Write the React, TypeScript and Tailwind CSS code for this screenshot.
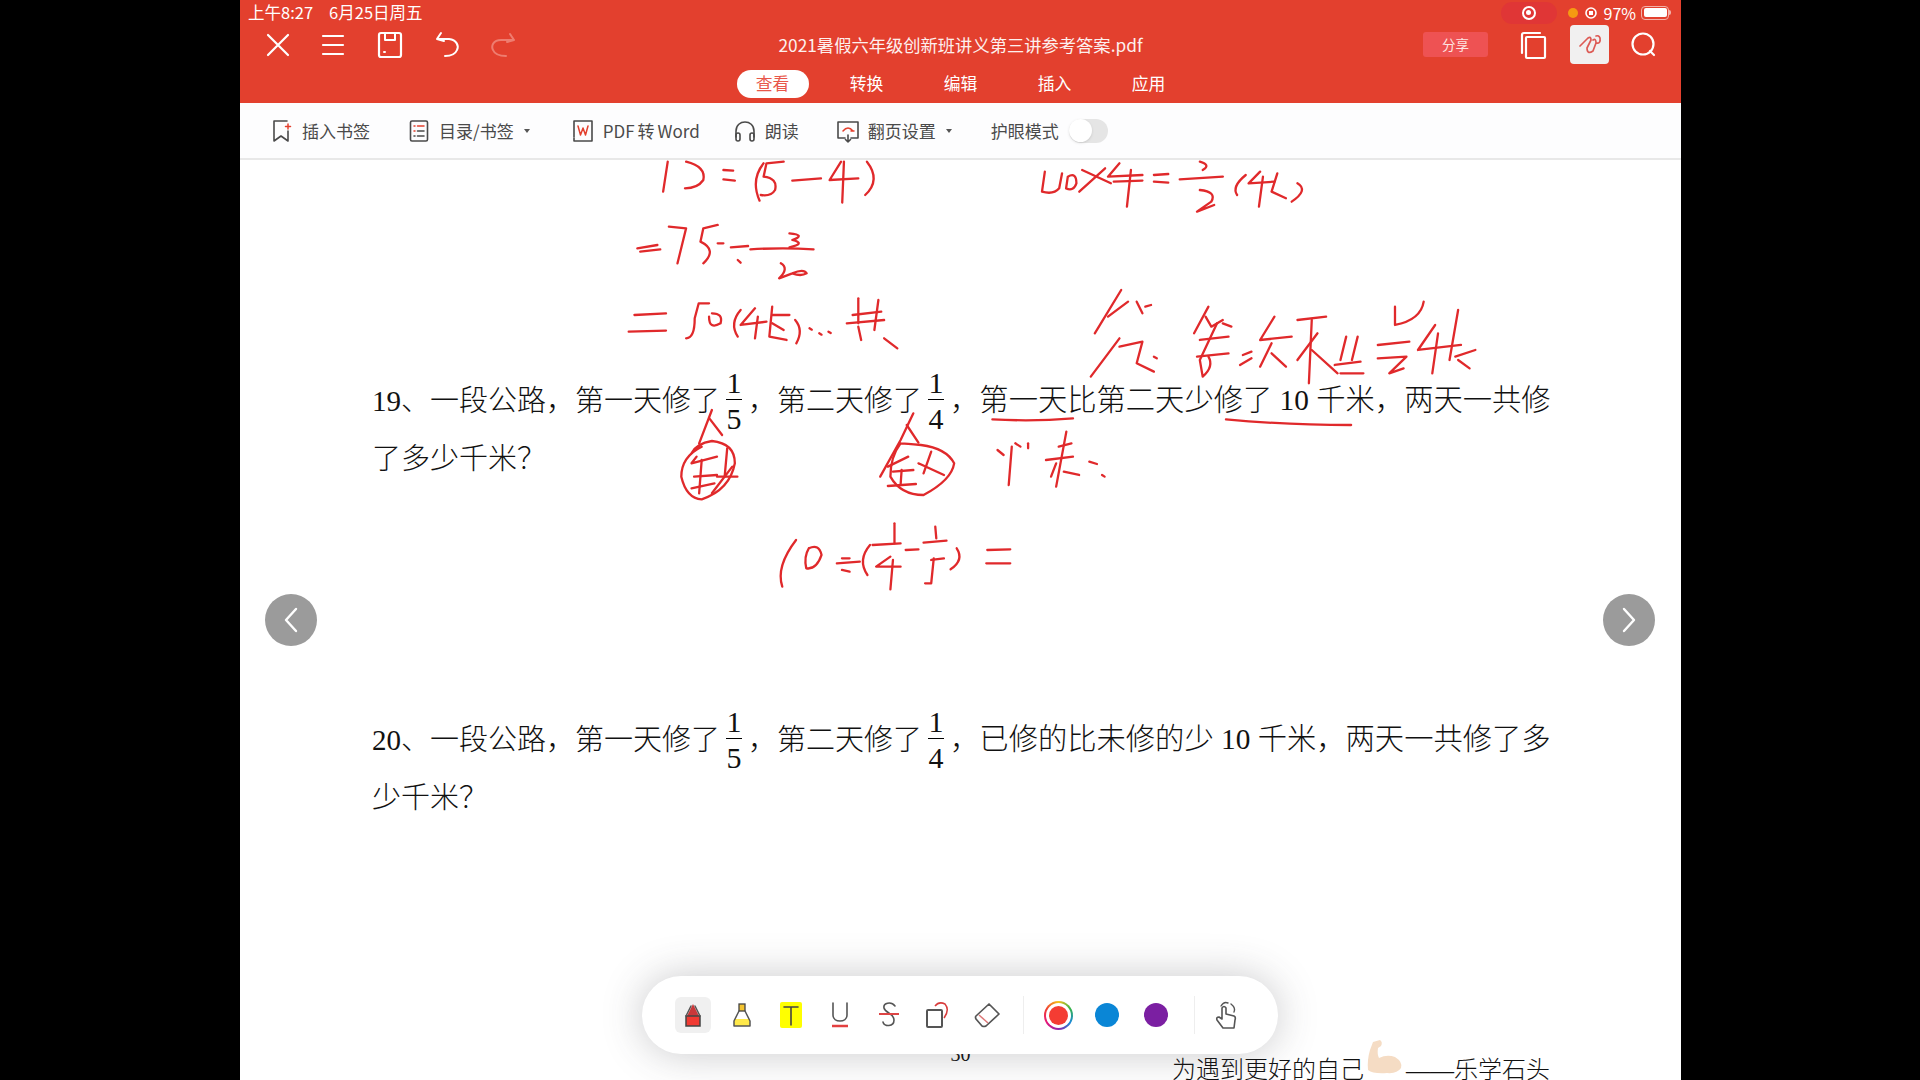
import type { ReactNode } from 'react'

const cjk = { fontFamily: '"Noto Sans CJK SC", "Noto Sans", sans-serif' }
const paper = { fontFamily: '"Liberation Serif", "Noto Sans CJK SC", serif' }

const Stroke = ({ d, w = 2.3 }: { d: string; w?: number }) => (
  <path d={d} fill="none" stroke="#e0292b" strokeWidth={w} strokeLinecap="round" strokeLinejoin="round" vectorEffect="non-scaling-stroke" />
)

// pen strokes, traced in crop coordinates and placed with a group transform
const upper = [
  'M118 5 L110 95', 'M150 5 Q185 20 180 60 Q170 85 148 85', 'M215 30 L232 32', 'M215 58 L235 62', 'M285 10 Q262 60 278 122',
  'M320 5 L290 10 L285 50 Q310 55 305 90 Q298 110 280 105', 'M335 62 L385 55', 'M420 5 L400 60 L450 55', 'M425 5 L422 128', 'M465 5 Q490 60 462 105',
  'M775 35 L770 95 Q790 105 800 85 L805 40', 'M815 50 Q830 35 830 70 Q825 95 812 85 Z', 'M840 30 L890 70', 'M880 25 L835 95',
  'M905 10 L885 50 L945 45', 'M895 65 L945 62', 'M925 30 L918 140', 'M965 45 L990 42', 'M965 65 L990 68', 'M1010 58 L1085 50',
  'M1045 5 Q1065 15 1050 30', 'M1045 90 Q1075 95 1065 125 L1040 155 L1070 135', 'M1125 45 Q1100 80 1110 105', 'M1150 35 L1130 70 L1175 65',
  'M1155 50 L1148 140', 'M1180 40 L1170 95 L1195 115', 'M1215 70 Q1235 90 1205 125',
  'M65 265 L100 255', 'M70 275 L105 268', 'M120 200 L150 205 L135 310', 'M205 195 L180 205 L175 245 Q205 270 180 310', 'M205 250 L215 250',
  'M228 262 L258 258', 'M240 300 L245 308', 'M262 268 Q320 262 372 268', 'M330 220 Q360 225 335 240 Q360 250 330 262',
  'M315 310 Q330 325 312 355 L335 340 Q355 325 360 340 Q350 350 335 340',
  'M60 465 L115 460', 'M50 515 L115 512', 'M190 430 L172 430 L165 475 Q165 535 150 535', 'M195 460 Q215 460 210 490 Q190 510 190 470',
  'M245 450 Q225 490 240 530', 'M270 445 L245 495 L290 485', 'M275 470 L270 535', 'M300 440 L295 530 L325 540', 'M300 465 L330 465', 'M300 490 L320 510',
  'M340 480 Q355 510 342 550', 'M365 505 l4 4', 'M382 520 l4 4', 'M398 515 l4 4', 'M450 415 L450 490', 'M485 420 L478 510', 'M440 465 L490 455', 'M430 490 L495 480',
  'M455 540 L450 500', 'M495 535 L518 565',
  'M908 390 L862 520', 'M885 470 L920 425', 'M935 425 L945 460', 'M950 440 L960 435', 'M905 535 L855 650', 'M905 560 L945 545 L935 610 L965 635', 'M965 590 L970 595',
  'M1060 440 L1035 520', 'M1055 470 L1065 500 L1085 480', 'M1085 490 L1100 500', 'M1045 540 L1095 530', 'M1075 490 L1045 600 L1050 650 Q1070 620 1060 590', 'M1040 590 L1095 580',
  'M1120 585 L1135 575', 'M1115 615 L1135 595', 'M1175 470 L1150 540 L1205 530', 'M1170 550 L1150 620', 'M1170 580 L1195 620',
  'M1215 480 L1265 470', 'M1240 480 L1235 670', 'M1215 600 L1250 520', 'M1240 570 L1285 640', 'M1300 530 L1290 600', 'M1320 530 L1310 600', 'M1280 615 L1325 605', 'M1290 640 L1330 640',
  'M1385 440 L1385 495 Q1430 480 1435 425', 'M1355 555 L1410 545', 'M1355 595 L1405 590 L1375 640 L1400 625', 'M1455 495 L1425 570 L1500 555', 'M1460 520 L1450 640',
  'M1495 450 L1480 600', 'M1490 590 L1525 570', 'M1495 600 L1515 625',
]

const lower = [
  'M690 150 L665 250', 'M685 175 L710 225', 'M670 260 Q630 290 630 350 Q640 415 670 418 Q725 390 735 310 Q735 250 690 243 Q660 250 650 280',
  'M660 290 L650 310 L700 290', 'M655 350 L700 345', 'M650 385 L695 370', 'M670 300 L665 400', 'M720 265 L715 350', 'M700 350 L740 350', 'M690 400 L730 320',
  'M1085 160 L1060 240 L1020 350', 'M1072 195 L1095 248', 'M1060 250 Q1040 290 1040 350 Q1060 405 1105 405 Q1160 360 1165 310 Q1150 265 1100 255 Q1070 250 1060 250',
  'M1035 320 L1075 290', 'M1045 335 L1085 330', 'M1035 378 L1090 372', 'M1062 330 L1060 375', 'M1120 275 L1105 340', 'M1095 310 L1145 345',
  'M1250 270 L1262 285', 'M1285 250 L1295 260', 'M1310 250 L1310 265', 'M1278 260 L1272 375', 'M1385 215 L1365 380', 'M1370 260 L1395 250', 'M1345 300 L1398 290',
  'M1365 310 L1355 350', 'M1380 335 L1410 345', 'M1430 305 L1445 312', 'M1455 345 L1460 350', 'M1240 178 Q1320 185 1398 175',
  'M855 540 Q815 620 828 680', 'M880 565 Q900 550 905 585 Q895 630 875 625 Q870 590 880 565', 'M945 595 L960 595', 'M935 610 L980 605', 'M945 630 L960 635',
  'M1000 555 Q975 600 995 645', 'M1048 490 L1048 550', 'M1005 555 L1060 550', 'M1040 590 L1012 620 L1060 620', 'M1045 600 L1040 688', 'M1070 570 L1095 568',
  'M1128 500 L1130 535', 'M1105 548 L1150 542', 'M1120 600 L1145 595', 'M1125 595 L1120 670 Q1115 670 1108 670', 'M1170 565 Q1185 600 1158 628', 'M1230 570 L1275 568', 'M1228 610 L1275 610',
]

function Ink() {
  return (
    <svg className="absolute inset-0 pointer-events-none" width={1440} height={920} viewBox="240 160 1440 920">
      <g transform="translate(600 160) scale(0.574 0.3333)">
        {upper.map((d) => <Stroke key={d} d={d} />)}
      </g>
      <g transform="translate(360 360) scale(0.51 0.3333)">
        {lower.map((d) => <Stroke key={d} d={d} />)}
      </g>
      <g transform="translate(960 360) scale(0.3827 0.3333)">
        <Stroke d="M695 178 Q850 195 1022 195" />
      </g>
    </svg>
  )
}

const Line = ({ d, c = 'white', w = 2, f = 'none' }: { d: string; c?: string; w?: number; f?: string }) => (
  <path d={d} fill={f} stroke={c} strokeWidth={w} strokeLinecap="round" strokeLinejoin="round" />
)

const Ico = ({ size = 32, children }: { size?: number; children: ReactNode }) => (
  <svg width={size} height={size} viewBox="0 0 32 32" className="shrink-0">{children}</svg>
)

function Fraction({ bottom }: { bottom: string }) {
  return (
    <span className="flex flex-col items-center w-[24px] mx-[2px] -mt-[4px] leading-none text-[30px]">
      <span className="h-[33px] leading-[34px]">1</span>
      <span className="h-px w-[16px] bg-black" />
      <span className="h-[33px] leading-[38px]">{bottom}</span>
    </span>
  )
}

const ToolText = ({ children }: { children: ReactNode }) => <span className="text-[17px] text-[#4a4a4a] whitespace-nowrap">{children}</span>
const Caret = () => <span className="ml-[2px] w-0 h-0 border-x-[3.5px] border-x-transparent border-t-[4px] border-t-[#555]" />

function Tool({ className, icon, children, caret }: { className: string; icon: ReactNode; children: ReactNode; caret?: boolean }) {
  return (
    <div className={`flex items-center gap-2 ${className}`}>
      {icon}
      <ToolText>{children}</ToolText>
      {caret && <Caret />}
    </div>
  )
}

const tb = { c: '#4a4a4a', w: 1.6 }

const Dot = ({ className }: { className: string }) => <span className={`w-[24px] h-[24px] rounded-full ${className}`} />

function Cell({ active, children }: { active?: boolean; children: ReactNode }) {
  return <div className={`w-[36px] h-[36px] flex items-center justify-center rounded-md ${active ? 'bg-[#f0f0f0]' : ''}`}>{children}</div>
}

export default function App() {
  return (
    <div className="flex w-[1920px] h-[1080px] bg-black overflow-hidden" style={cjk}>
      <div className="w-[240px] shrink-0" />
      <main className="w-[1441px] h-[1080px] flex flex-col bg-white">
        <header className="h-[103px] bg-[#e3402e] text-white flex flex-col shrink-0">
          <div className="h-[25px] flex items-center pl-[8px] pr-[10px] text-[16.5px] leading-none">
            <span className="mr-[16px]">上午8:27</span>
            <span>6月25日周五</span>
            <span className="ml-auto mr-[4px] w-[56px] h-[22px] rounded-full bg-[#e03636] flex items-center justify-center">
              <span className="w-[14px] h-[14px] rounded-full border-2 border-white flex items-center justify-center">
                <span className="w-[5px] h-[5px] rounded-full bg-white" />
              </span>
            </span>
            <span className="ml-[7px] w-[10px] h-[10px] rounded-full bg-[#f59a12]" />
            <svg width="16" height="16" viewBox="0 0 16 16" className="ml-[5px]">
              <circle cx="8" cy="8" r="5" fill="none" stroke="white" strokeWidth="1.6" />
              <rect x="6" y="6" width="4" height="4" fill="white" />
            </svg>
            <span className="ml-[5px] text-[16px]">97%</span>
            <span className="ml-[5px] w-[28px] h-[14px] rounded-[4px] border border-[#f3b0a8] p-[1.5px]">
              <span className="block w-full h-full rounded-[2px] bg-white" />
            </span>
            <span className="w-[2px] h-[5px] bg-[#f3b0a8] rounded-r" />
          </div>
          <div className="h-[39px] grid grid-cols-[1fr_auto_1fr] items-center">
            <div className="flex items-center gap-[24px] pl-[22px]">
              <Ico><Line d="M6 6 L26 26 M26 6 L6 26" w={2.2} /></Ico>
              <Ico><Line d="M5 7 H25 M5 16 H25 M5 25 H25" w={2.2} /></Ico>
              <Ico>
                <rect x="5" y="4" width="22" height="24" rx="2" fill="none" stroke="white" strokeWidth="2.2" />
                <Line d="M11 5 V11 H21 V5" w={2} />
                <Line d="M10 23 H11" w={2} />
              </Ico>
              <Ico><Line d="M11 4 L7 10 L14 12 M8 10 H19 C27 11 29 17 27 21 C25 26 20 27 15 27" w={2} /></Ico>
              <Ico><Line d="M24 5 L28 11 L21 13 M27 11 H15 C7 11 5 17 7 21 C9 26 15 27 20 27" c="#ee7d70" w={2} /></Ico>
            </div>
            <div className="text-[17.3px] leading-none whitespace-nowrap text-[#fdf0ee]">2021暑假六年级创新班讲义第三讲参考答案.pdf</div>
            <div className="flex items-center justify-end pr-[21px]">
              <span className="w-[65px] h-[25px] rounded-[3px] bg-[#ee5253] text-[13.5px] flex items-center justify-center text-[#fde4e2]">分享</span>
              <span className="ml-[30px] flex">
                <Ico>
                  <rect x="8" y="8" width="19" height="21" rx="1" fill="none" stroke="white" strokeWidth="2.2" />
                  <Line d="M22 4 H6 Q4 4 4 6 V24" w={2.2} />
                </Ico>
              </span>
              <span className="ml-[20px] w-[39px] h-[39px] rounded bg-[#f1f0f0] flex items-center justify-center">
                <svg width="28" height="28" viewBox="0 0 28 28">
                  <Line d="M4 15 L12 7 Q15 5 15 9 L11 17 Q11 24 17 20 L20 12 Q20 7 17 9 M20 12 Q25 13 24 7 Q23 4 20 5" c="#dd5a55" w={1.7} />
                </svg>
              </span>
              <span className="ml-[19px] flex">
                <Ico>
                  <circle cx="15" cy="15" r="10.5" fill="none" stroke="white" strokeWidth="2.2" />
                  <Line d="M22 22 L26 26" w={2.2} />
                </Ico>
              </span>
            </div>
          </div>
          <nav className="mt-[6px] h-[28px] flex items-center justify-center gap-[22px] text-[16.8px]">
            <span className="w-[72px] h-[28px] rounded-full bg-white text-[#e8574a] flex items-center justify-center">查看</span>
            <span className="w-[72px] text-center">转换</span>
            <span className="w-[72px] text-center">编辑</span>
            <span className="w-[72px] text-center">插入</span>
            <span className="w-[72px] text-center">应用</span>
          </nav>
        </header>

        <div className="h-[57px] shrink-0 flex items-center pl-[30px] bg-[#fdfdfe] border-b-2 border-[#e8e8e8]">
          <Tool className="" icon={
            <svg width="24" height="24" viewBox="0 0 24 24" className="shrink-0">
              <Line d="M17 2 H4 V22 L11 17 L18 22 V12" {...tb} />
              <Line d="M18 5 V10 M15.5 7.5 H20.5" c="#e3402e" w={1.5} />
            </svg>
          }>插入书签</Tool>
          <Tool className="ml-[37px]" caret icon={
            <svg width="24" height="24" viewBox="0 0 24 24" className="shrink-0">
              <rect x="3.5" y="2" width="17" height="20" rx="1.5" fill="none" stroke="#4a4a4a" strokeWidth="1.6" />
              <Line d="M7 7 H8 M7 12 H8" c="#e3402e" w={1.5} />
              <Line d="M7 17 H8 M10.5 12 H17 M10.5 17 H17" {...tb} />
              <Line d="M10.5 7 H17" c="#e3402e" w={1.5} />
            </svg>
          }>目录/书签</Tool>
          <Tool className="ml-[41px]" icon={
            <svg width="24" height="24" viewBox="0 0 24 24" className="shrink-0">
              <Line d="M3 18 V2 H21 V22 H3 V19" {...tb} />
              <Line d="M7 7 L9.5 16 L12 9 L14.5 16 L17 7" c="#e3402e" w={1.5} />
            </svg>
          }>PDF<span className="mx-[3px]">转</span>Word</Tool>
          <Tool className="ml-[33px]" icon={
            <svg width="24" height="24" viewBox="0 0 24 24" className="shrink-0">
              <Line d="M3 18 V12 C3 0 21 0 21 12 V18" {...tb} />
              <rect x="3" y="14" width="4" height="8" rx="2" fill="none" stroke="#4a4a4a" strokeWidth="1.6" />
              <rect x="17" y="14" width="4" height="8" rx="2" fill="none" stroke="#4a4a4a" strokeWidth="1.6" />
            </svg>
          }>朗读</Tool>
          <Tool className="ml-[37px]" caret icon={
            <svg width="24" height="24" viewBox="0 0 24 24" className="shrink-0">
              <Line d="M9 19 H2 V3 H22 V19 H15 M12 16 V23 M9.5 20.5 L12 23 L14.5 20.5" {...tb} />
              <Line d="M7 12 Q12 6 17 12 M15 12 H18" c="#e3402e" w={1.5} />
            </svg>
          }>翻页设置</Tool>
          <ToolText><span className="ml-[39px]">护眼模式</span></ToolText>
          <span className="ml-[10px] w-[39px] h-[24px] rounded-full bg-[#e5e5e5] flex items-center">
            <span className="w-[23px] h-[23px] rounded-full bg-white shadow" />
          </span>
        </div>

        <section className="relative flex-1 min-h-0 overflow-hidden bg-white text-[#111]" style={paper}>
          <div className="pt-[212px] pl-[132px] text-[29px] leading-none font-light">
            <div className="h-[58px] flex items-center whitespace-nowrap">
              <span>19、一段公路，第一天修了</span>
              <Fraction bottom="5" />
              <span>，第二天修了</span>
              <Fraction bottom="4" />
              <span className="text-[29.3px]">，第一天比第二天少修了 10 千米，两天一共修</span>
            </div>
            <div className="h-[58px] flex items-center whitespace-nowrap">了多少千米？</div>
            <div className="mt-[223px] h-[58px] flex items-center whitespace-nowrap">
              <span>20、一段公路，第一天修了</span>
              <Fraction bottom="5" />
              <span>，第二天修了</span>
              <Fraction bottom="4" />
              <span className="text-[29.3px]">，已修的比未修的少 10 千米，两天一共修了多</span>
            </div>
            <div className="h-[58px] flex items-center whitespace-nowrap">少千米？</div>
          </div>
          <div className="mt-[215px] grid pr-[131px]">
            <span className="col-start-1 row-start-1 justify-self-center pl-[131px] text-[20px] leading-[24px]">30</span>
            <div className="col-start-1 row-start-1 justify-self-end mt-[10px] h-[36px] flex items-center text-[24px] leading-none font-light whitespace-nowrap">
              <span>为遇到更好的自己</span>
              <svg width="40" height="40" viewBox="0 0 40 40" className="-mt-[24px] mx-px">
                <path d="M8 4 L15 2 Q18 4 16 8 L13 10 Q12 16 14 20 Q22 16 30 19 Q38 24 36 30 Q32 36 22 35 Q8 36 3 32 Q2 22 5 12 Z" fill="#f5dcc4" />
              </svg>
              <span>——乐学石头</span>
            </div>
          </div>

          <Ink />

          <button className="absolute left-[25px] top-[434px] w-[52px] h-[52px] rounded-full bg-[#9b9b9b] flex items-center justify-center">
            <svg width="24" height="30" viewBox="0 0 24 30"><Line d="M17 4 L7 15 L17 26" w={2.4} /></svg>
          </button>
          <button className="absolute right-[26px] top-[434px] w-[52px] h-[52px] rounded-full bg-[#9b9b9b] flex items-center justify-center">
            <svg width="24" height="30" viewBox="0 0 24 30"><Line d="M7 4 L17 15 L7 26" w={2.4} /></svg>
          </button>

          <div className="absolute left-[402px] top-[816px] w-[636px] h-[78px] rounded-[39px] bg-white shadow-[0_0_40px_rgba(60,60,70,0.28)] flex items-center gap-[13px] pl-[33px]">
            <Cell active>
              <svg width="24" height="28" viewBox="0 0 24 28">
                <path d="M12 3 L18 15 H6 Z" fill="#c9383a" />
                <rect x="5" y="15" width="14" height="10" fill="#f03a32" stroke="#444" strokeWidth="1.5" />
                <Line d="M5 15 L10 5 M19 15 L14 5" c="#555" w={1.5} />
              </svg>
            </Cell>
            <Cell>
              <svg width="24" height="28" viewBox="0 0 24 28">
                <rect x="9" y="3" width="6" height="7" fill="#f4c430" stroke="#444" strokeWidth="1.3" />
                <rect x="4" y="18" width="16" height="7" fill="#ffe94a" />
                <Line d="M9 10 L4 20 V25 H20 V20 L15 10" c="#555" w={1.5} />
              </svg>
            </Cell>
            <Cell>
              <svg width="22" height="26" viewBox="0 0 22 26">
                <rect width="22" height="26" rx="2" fill="#ffff00" />
                <Line d="M4 5 H18 M11 5 V23" c="#444" w={1.6} />
              </svg>
            </Cell>
            <Cell>
              <svg width="20" height="28" viewBox="0 0 20 28">
                <Line d="M3 2 V14 C3 22 17 22 17 14 V2" c="#555" w={1.6} />
                <path d="M2 25 H18" stroke="#e34040" strokeWidth="2.5" />
              </svg>
            </Cell>
            <Cell>
              <svg width="24" height="28" viewBox="0 0 24 28">
                <Line d="M18 5 C14 0 6 2 7 7 C8 12 17 12 17 19 C17 26 7 26 6 21" c="#555" w={1.6} />
                <path d="M2 13 H22" stroke="#dd4444" strokeWidth="2" />
              </svg>
            </Cell>
            <Cell>
              <svg width="28" height="28" viewBox="0 0 28 28">
                <rect x="3" y="9" width="15" height="17" rx="1" fill="none" stroke="#555" strokeWidth="2" />
                <path d="M11 5 Q15 0 21 3 Q26 9 20 17" fill="none" stroke="#d83c3c" strokeWidth="1.5" />
              </svg>
            </Cell>
            <Cell>
              <svg width="28" height="28" viewBox="0 0 28 28">
                <path d="M16 3 L26 13 L13 25 Q11 26 9 25 L3 18 Q2 16 3 15 Z" fill="none" stroke="#555" strokeWidth="1.7" strokeLinejoin="round" />
                <path d="M6 14 L15 22" stroke="#dd7777" strokeWidth="1.5" />
              </svg>
            </Cell>
            <span className="ml-[5px] w-px h-[38px] bg-[#eeeeee]" />
            <span className="ml-[3px] w-[36px] h-[36px] flex items-center justify-center">
              <span className="w-[29px] h-[29px] rounded-full p-[2px] bg-[conic-gradient(#f6c21a,#35b34a,#1c8ad8,#8e24aa,#e6177a,#f04030,#f6c21a)]">
                <span className="w-full h-full rounded-full bg-white flex items-center justify-center">
                  <span className="w-[19px] h-[19px] rounded-full bg-[#f43c33]" />
                </span>
              </span>
            </span>
            <Cell><Dot className="bg-[#0a86d6]" /></Cell>
            <Cell><Dot className="bg-[#7b1fa2]" /></Cell>
            <span className="ml-[7px] w-px h-[38px] bg-[#eeeeee]" />
            <span className="ml-px">
              <Cell>
                <svg width="28" height="30" viewBox="0 0 28 30">
                  <Line d="M10 28 L4 20 Q3 17 6 17 L9 19 V8 Q11 5 13 8 V14 L21 16 Q23 17 22 20 L21 28 Z" c="#555" w={1.6} />
                  <Line d="M8 6 Q11 1 15 3 M18 4 Q23 8 21 12" c="#555" w={1.4} />
                </svg>
              </Cell>
            </span>
          </div>
        </section>
      </main>
      <div className="w-[239px] shrink-0" />
    </div>
  )
}
